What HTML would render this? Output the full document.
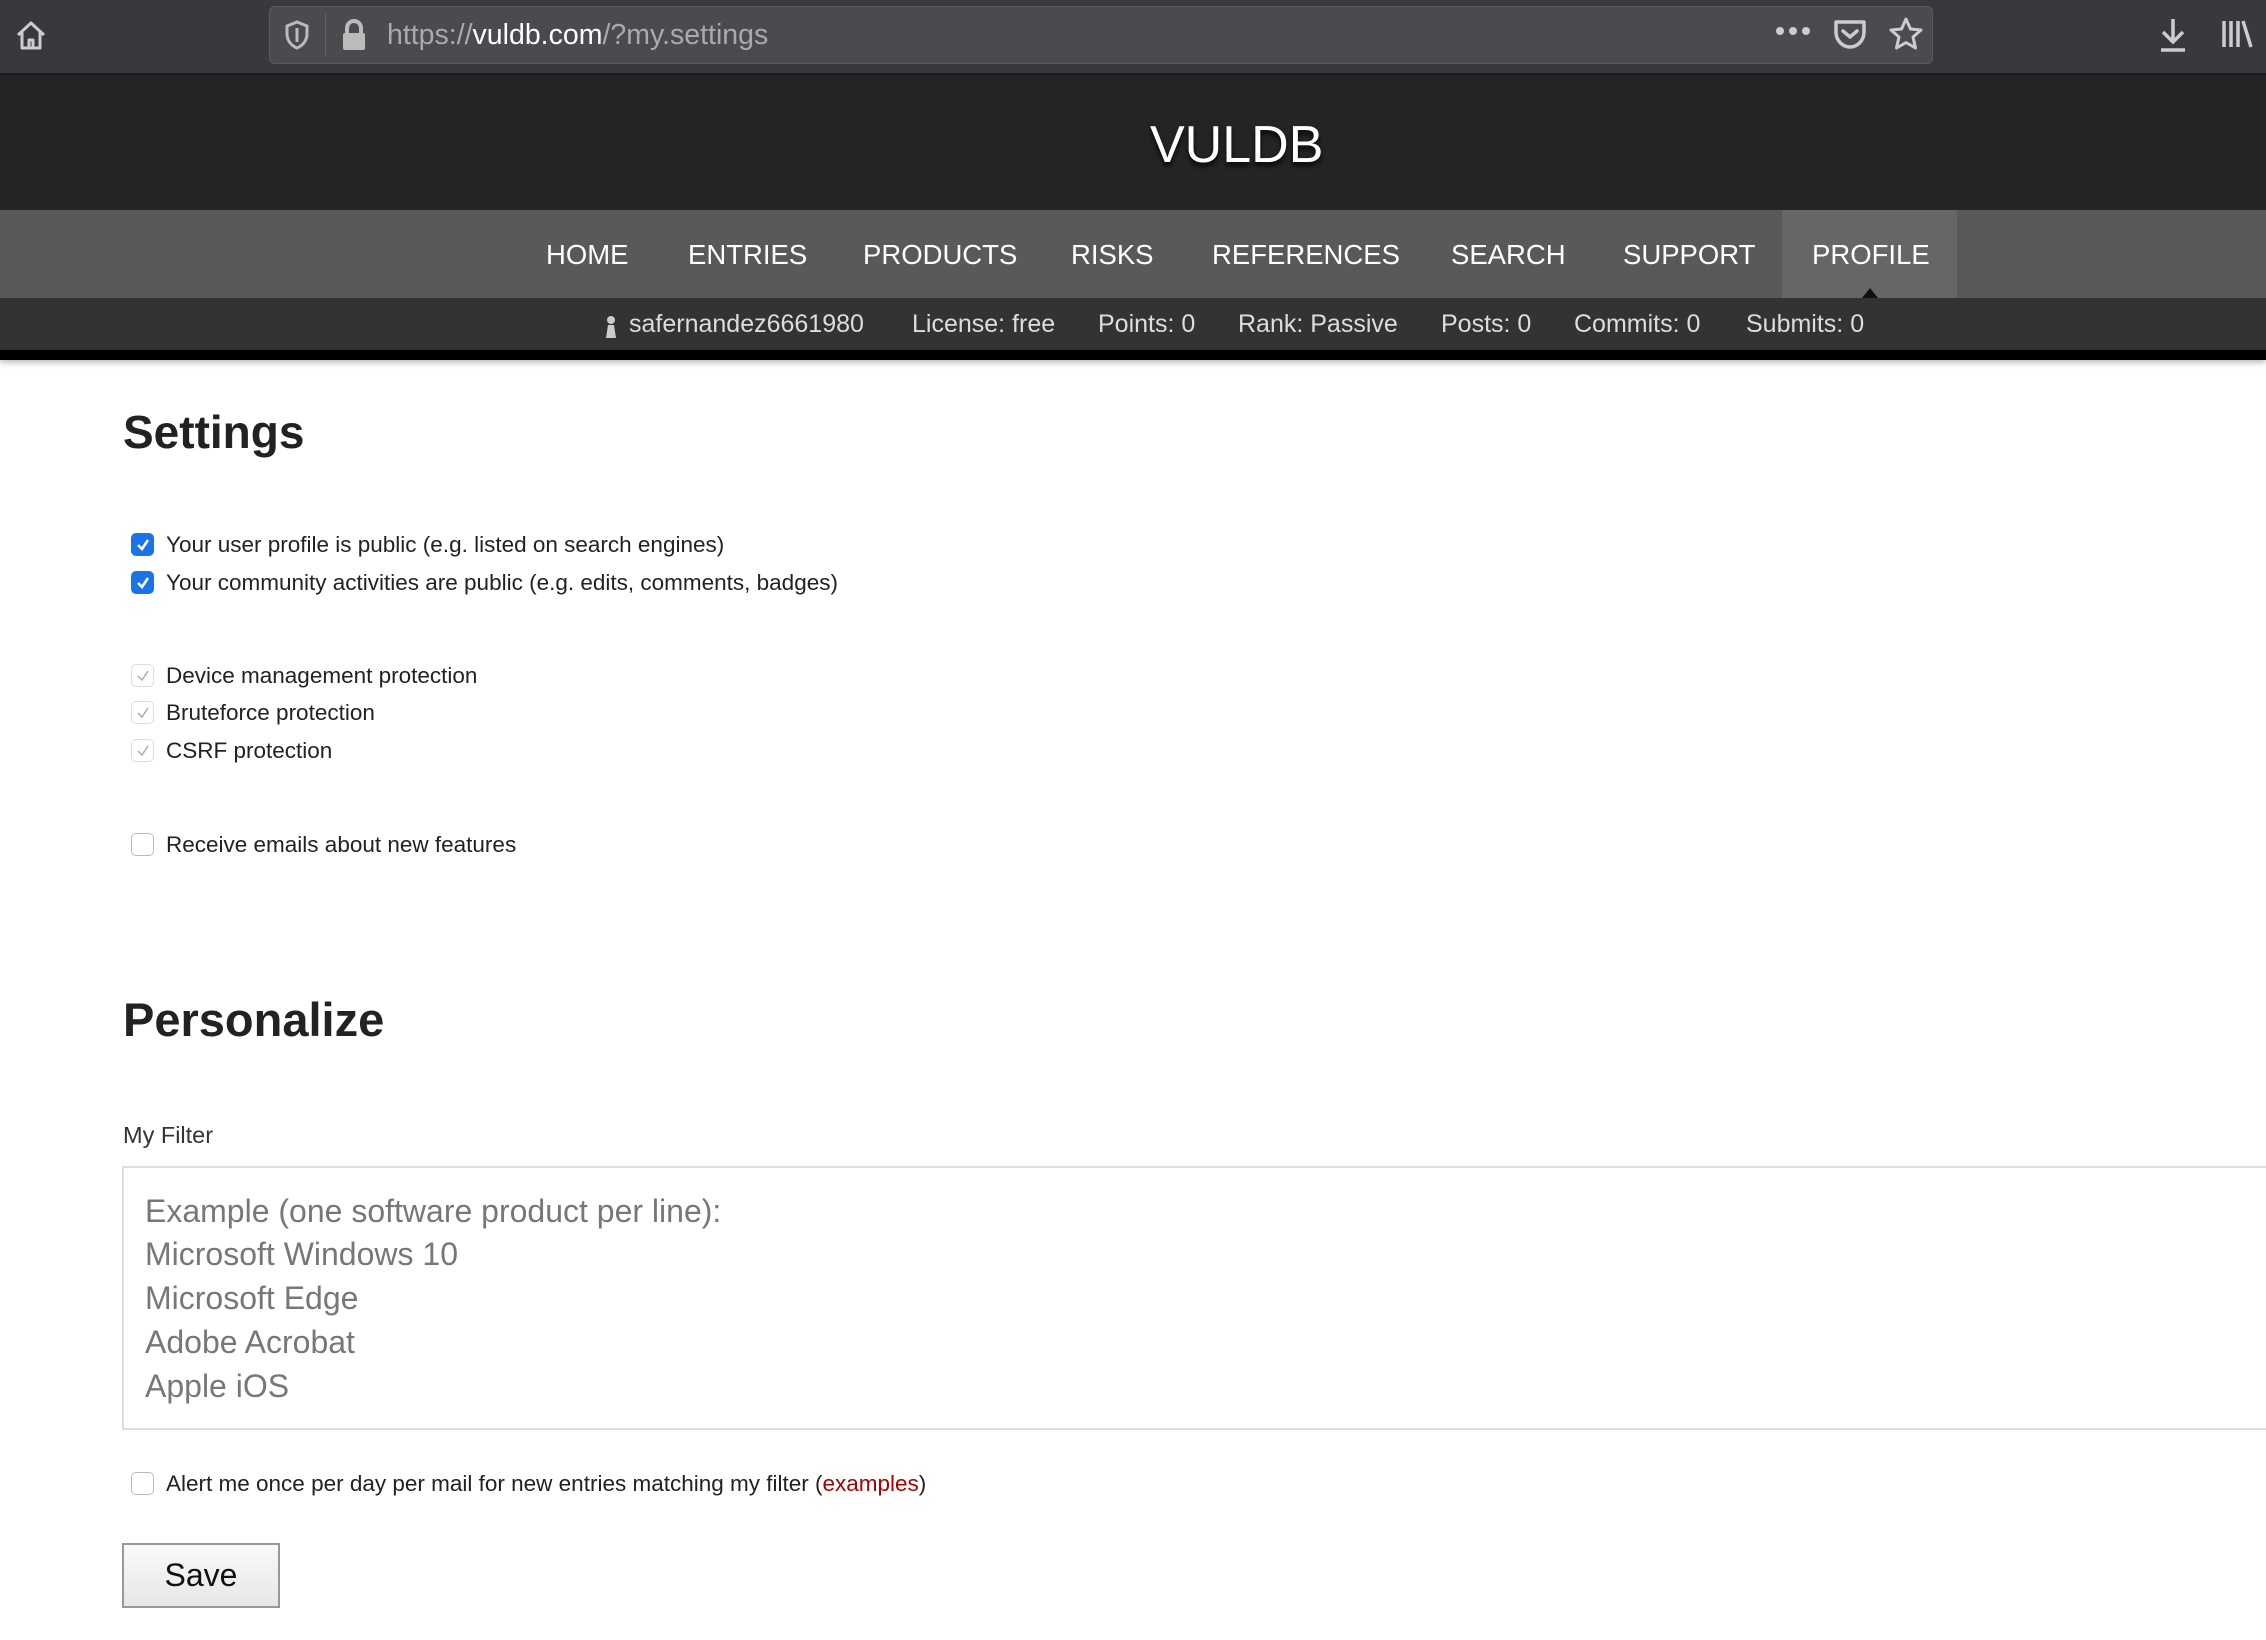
<!DOCTYPE html>
<html><head><meta charset="utf-8"><style>
*{margin:0;padding:0;box-sizing:border-box}
body{width:2266px;height:1640px;overflow:hidden;background:#fff;font-family:"Liberation Sans",Arial,sans-serif;position:relative}
.a{position:absolute;white-space:nowrap}
#tb{left:0;top:0;width:2266px;height:75px;background:#38383d;border-bottom:2px solid #1c1c1f}
#url{left:269px;top:6px;width:1664px;height:58px;background:#4a4a4f;border-radius:6px;border:1px solid #5a5a5f}
#hd{left:0;top:75px;width:2266px;height:135px;background:#242424}
#nav{left:0;top:210px;width:2266px;height:88px;background:#595959}
#ub{left:0;top:298px;width:2266px;height:52px;background:#333}
#bl{left:0;top:350px;width:2266px;height:10px;background:#000;box-shadow:0 3px 6px rgba(0,0,0,.25)}
.n{top:238px;font-size:27.5px;color:#fff;line-height:34px}
.u{top:309px;font-size:25px;color:#ddd;line-height:30px}
.cb{width:23px;height:23px;border-radius:5px;border:1.5px solid #bbb;background:#fff;left:131px}
.cb.on{background:#1a73e8;border-color:#1a73e8}
.cb svg{position:absolute;left:3px;top:3px}
.t{left:166px;font-size:22.5px;color:#222;line-height:26px}
h1{position:absolute;font-weight:bold;color:#222;font-size:46px;line-height:56px}
.ta{font-size:32px;color:#777;left:145px;line-height:40px}
</style></head><body>
<div id="tb" class="a"></div>
<svg class="a" style="left:14px;top:18px" width="34" height="34" viewBox="0 0 34 34"><path d="M4 17 L17 5 L30 17 M8 14 V30 H26 V14 M15 30 V22 H19 V30" fill="none" stroke="#ccc" stroke-width="3" stroke-linejoin="round"/></svg>
<div id="url" class="a"></div>
<svg class="a" style="left:284px;top:20px" width="26" height="30" viewBox="0 0 26 30"><path d="M13 2 L23 6 V14 C23 21 18 26 13 28 C8 26 3 21 3 14 V6 Z" fill="none" stroke="#bbb" stroke-width="3"/><path d="M13 8 V22" stroke="#bbb" stroke-width="3"/></svg>
<div class="a" style="left:325px;top:14px;width:1px;height:42px;background:#666"></div>
<svg class="a" style="left:340px;top:18px" width="28" height="34" viewBox="0 0 28 34"><path d="M7 15 V10 a7 7 0 0 1 14 0 V15" fill="none" stroke="#bbb" stroke-width="4"/><rect x="3" y="15" width="22" height="17" rx="2" fill="#bbb"/></svg>
<div class="a" style="left:387px;top:18px;font-size:28.5px;line-height:34px;color:#aaa">https://<span style="color:#fff">vuldb.com</span>/?my.settings</div>
<svg class="a" style="left:1775px;top:26px" width="36" height="10"><circle cx="5" cy="5" r="4" fill="#ccc"/><circle cx="18" cy="5" r="4" fill="#ccc"/><circle cx="31" cy="5" r="4" fill="#ccc"/></svg>
<svg class="a" style="left:1833px;top:18px" width="34" height="32" viewBox="0 0 34 32"><path d="M3 4 H31 V14 C31 23 24 29 17 29 C10 29 3 23 3 14 Z" fill="none" stroke="#ccc" stroke-width="3.5" stroke-linejoin="round"/><path d="M10 13 L17 19 L24 13" fill="none" stroke="#ccc" stroke-width="3.5" stroke-linecap="round"/></svg>
<svg class="a" style="left:1888px;top:16px" width="36" height="36" viewBox="0 0 36 36"><path d="M18 3 L22.5 13 L33 14 L25 21 L27.5 32 L18 26.5 L8.5 32 L11 21 L3 14 L13.5 13 Z" fill="none" stroke="#ccc" stroke-width="3" stroke-linejoin="round"/></svg>
<svg class="a" style="left:2158px;top:17px" width="30" height="36" viewBox="0 0 30 36"><path d="M15 2 V24 M5 15 L15 25 L25 15 M3 33 H27" fill="none" stroke="#ccc" stroke-width="3.5"/></svg>
<svg class="a" style="left:2220px;top:18px" width="34" height="32" viewBox="0 0 34 32"><path d="M4 3 V29 M11 3 V29 M18 3 V29 M23 3 L31 29" fill="none" stroke="#ccc" stroke-width="3.5"/></svg>

<div id="hd" class="a"></div>
<div class="a" style="left:1150px;width:170px;top:112px;text-align:center;font-size:52px;line-height:66px;color:#fff;text-shadow:0 4px 5px rgba(0,0,0,.8)">VULDB</div>
<div id="nav" class="a"></div>
<div class="a" style="left:1782px;top:210px;width:175px;height:88px;background:#666"></div>
<div class="a" style="left:1862px;top:288px;width:0;height:0;border-left:8px solid transparent;border-right:8px solid transparent;border-bottom:10px solid #111"></div>
<div class="a n" style="left:546px">HOME</div>
<div class="a n" style="left:688px">ENTRIES</div>
<div class="a n" style="left:863px">PRODUCTS</div>
<div class="a n" style="left:1071px">RISKS</div>
<div class="a n" style="left:1212px">REFERENCES</div>
<div class="a n" style="left:1451px">SEARCH</div>
<div class="a n" style="left:1623px">SUPPORT</div>
<div class="a n" style="left:1812px">PROFILE</div>
<div id="ub" class="a"></div>
<svg class="a" style="left:603px;top:314px" width="16" height="24" viewBox="0 0 16 24"><circle cx="8" cy="6" r="4" fill="#ccc"/><path d="M3 24 L5 11 H11 L13 24 Z" fill="#ccc"/></svg>
<div class="a u" style="left:629px">safernandez6661980</div>
<div class="a u" style="left:912px">License: free</div>
<div class="a u" style="left:1098px">Points: 0</div>
<div class="a u" style="left:1238px">Rank: Passive</div>
<div class="a u" style="left:1441px">Posts: 0</div>
<div class="a u" style="left:1574px">Commits: 0</div>
<div class="a u" style="left:1746px">Submits: 0</div>
<div id="bl" class="a"></div>

<h1 style="left:123px;top:404px">Settings</h1>

<div class="a cb on" style="top:533px"><svg width="16" height="16" viewBox="0 0 16 16"><path d="M3 8 L7 12 L13 3" fill="none" stroke="#fff" stroke-width="2.5"/></svg></div>
<div class="a t" style="top:532px">Your user profile is public (e.g. listed on search engines)</div>
<div class="a cb on" style="top:571px"><svg width="16" height="16" viewBox="0 0 16 16"><path d="M3 8 L7 12 L13 3" fill="none" stroke="#fff" stroke-width="2.5"/></svg></div>
<div class="a t" style="top:570px">Your community activities are public (e.g. edits, comments, badges)</div>

<div class="a cb" style="top:664px;border-color:#ddd"><svg width="16" height="16" viewBox="0 0 16 16"><path d="M3 8 L7 12 L13 3" fill="none" stroke="#aaa" stroke-width="1.5"/></svg></div>
<div class="a t" style="top:663px">Device management protection</div>
<div class="a cb" style="top:701px;border-color:#ddd"><svg width="16" height="16" viewBox="0 0 16 16"><path d="M3 8 L7 12 L13 3" fill="none" stroke="#aaa" stroke-width="1.5"/></svg></div>
<div class="a t" style="top:700px">Bruteforce protection</div>
<div class="a cb" style="top:739px;border-color:#ddd"><svg width="16" height="16" viewBox="0 0 16 16"><path d="M3 8 L7 12 L13 3" fill="none" stroke="#aaa" stroke-width="1.5"/></svg></div>
<div class="a t" style="top:738px">CSRF protection</div>

<div class="a cb" style="top:833px"></div>
<div class="a t" style="top:832px">Receive emails about new features</div>

<h1 style="left:123px;top:992px;font-size:47px">Personalize</h1>
<div class="a t" style="left:123px;top:1122px;font-size:23.5px;color:#333">My Filter</div>
<div class="a" style="left:122px;top:1166px;width:2200px;height:264px;border:2px solid #ddd"></div>
<div class="a ta" style="top:1191px">Example (one software product per line):</div>
<div class="a ta" style="top:1234px">Microsoft Windows 10</div>
<div class="a ta" style="top:1278px">Microsoft Edge</div>
<div class="a ta" style="top:1322px">Adobe Acrobat</div>
<div class="a ta" style="top:1366px">Apple iOS</div>

<div class="a cb" style="top:1472px"></div>
<div class="a t" style="top:1471px">Alert me once per day per mail for new entries matching my filter (<span style="color:#a00">examples</span>)</div>

<div class="a" style="left:122px;top:1543px;width:158px;height:65px;border:2px solid #999;background:linear-gradient(#fafafa,#e6e6e6);font-size:32px;line-height:60px;text-align:center;color:#111">Save</div>
</body></html>
